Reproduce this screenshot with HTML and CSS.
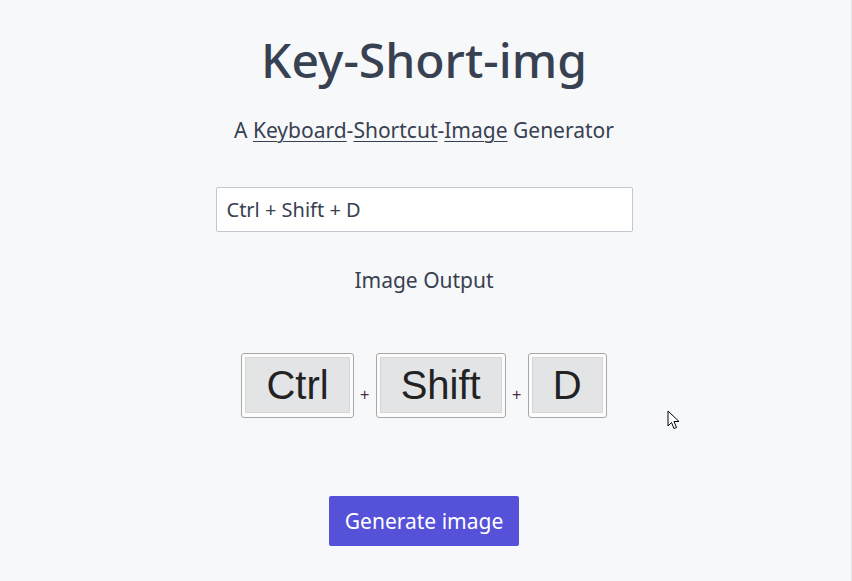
FILE: index.html
```html
<!DOCTYPE html>
<html>
<head>
<meta charset="utf-8">
<link rel="stylesheet" href="styles.css">
</head>
<body>
<main class="page">
  <h1 class="title">Key-Short-img</h1>
  <p class="subtitle">A <u>Keyboard</u>-<u>Shortcut</u>-<u>Image</u> Generator</p>
  <input class="field" type="text" value="Ctrl + Shift + D">
  <p class="label">Image Output</p>
  <div class="keys">
    <span class="key"><span class="cap">Ctrl</span></span>
    <span class="plus">+</span>
    <span class="key"><span class="cap">Shift</span></span>
    <span class="plus">+</span>
    <span class="key"><span class="cap">D</span></span>
  </div>
  <button class="btn">Generate image</button>
</main>
<svg class="cursor" width="14" height="21" viewBox="0 0 14 21"><path d="M1 1 L1 16 L4.5 12.5 L7 18.5 L9.5 17.5 L7 11.5 L12 11.5 Z" fill="#fff" stroke="#000" stroke-width="1" stroke-linejoin="miter"/></svg>
</body>
</html>
```
FILE: styles.css
```css
html, body {
  margin: 0;
  padding: 0;
  background: #f7f8fa;
}
body {
  width: 851px;
  height: 581px;
  border-right: 1px solid #e3e4e6;
  font-family: "Noto Sans", "Open Sans", sans-serif;
  color: #374151;
  position: relative;
  overflow: hidden;
}
.page {
  width: 848px;
  display: flex;
  flex-direction: column;
  align-items: center;
}
.title {
  margin: 26px 0 0;
  font-size: 48px;
  font-weight: 550;
  line-height: 68px;
}
.subtitle {
  margin: 22px 0 0;
  font-size: 21px;
  line-height: 28px;
}
.subtitle u {
  text-decoration-thickness: 1px;
  text-underline-offset: 3px;
}
.field {
  margin-top: 43px;
  width: 417px;
  height: 45px;
  box-sizing: border-box;
  border: 1px solid #c3c7cf;
  border-radius: 2px;
  background: #fff;
  padding: 0 10px;
  font-family: inherit;
  font-size: 20px;
  color: #374151;
  outline: none;
}
.label {
  margin: 34px 0 0;
  font-size: 21px;
  line-height: 28px;
}
.keys {
  margin-top: 59px;
  display: flex;
  align-items: flex-end;
}
.key {
  display: block;
  box-sizing: border-box;
  height: 65px;
  border: 1px solid #a8a8a8;
  border-radius: 3px;
  background: #fcfcfc;
  padding: 3px 3px 4px 3px;
}
.cap {
  display: flex;
  align-items: center;
  justify-content: center;
  height: 100%;
  box-sizing: border-box;
  background: #e3e4e6;
  border: 1px solid #d6d6d8;
  font-family: "Liberation Sans", Arial, sans-serif;
  font-size: 40px;
  color: #222;
  padding: 0 20px;
}
.plus {
  font-family: "Liberation Sans", Arial, sans-serif;
  font-size: 16px;
  color: #4a2a44;
  width: 22px;
  text-align: center;
  padding-bottom: 14px;
}
.btn {
  margin-top: 78px;
  width: 190px;
  height: 50px;
  border: none;
  border-radius: 2px;
  background: #5551d8;
  color: #fff;
  font-family: inherit;
  font-size: 21px;
  cursor: pointer;
}
.cursor {
  position: absolute;
  left: 667px;
  top: 410px;
}
```
